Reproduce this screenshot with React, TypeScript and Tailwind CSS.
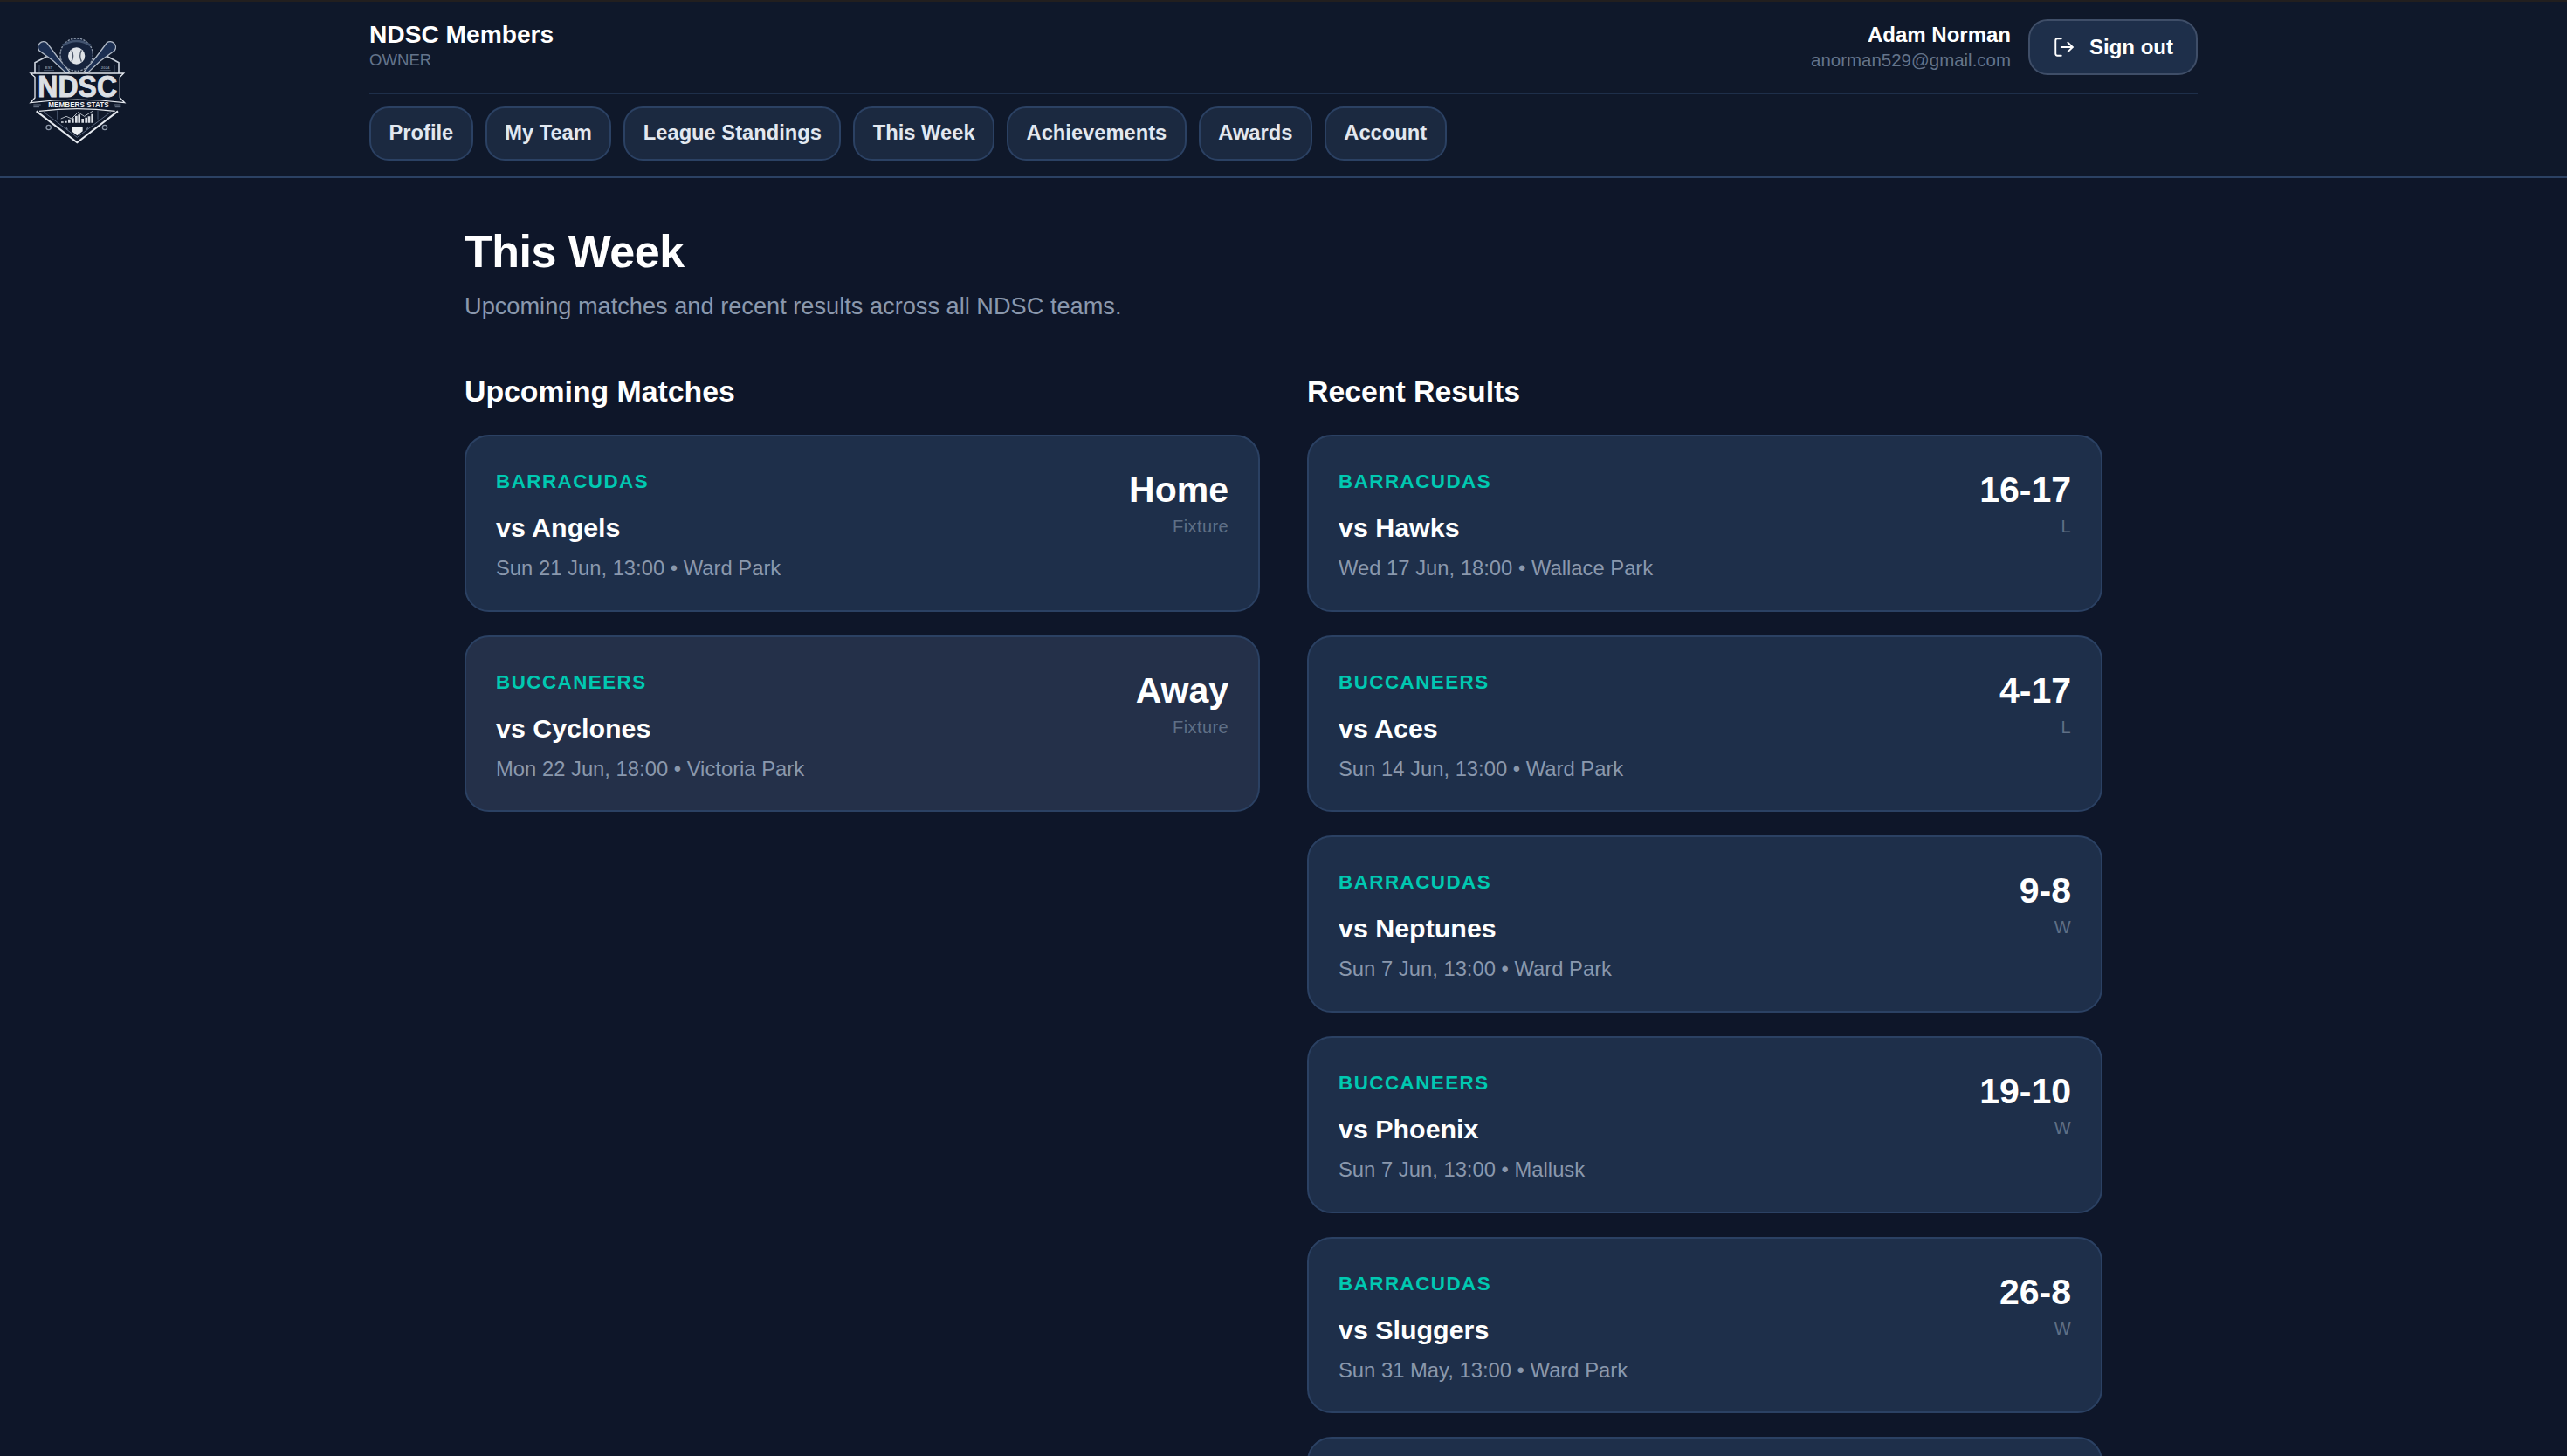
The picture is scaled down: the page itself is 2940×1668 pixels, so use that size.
import { LogOut } from "lucide-react";

const navItems = ["Profile", "My Team", "League Standings", "This Week", "Achievements", "Awards", "Account"];

const upcoming = [
  { team: "BARRACUDAS", opponent: "vs Angels", meta: "Sun 21 Jun, 13:00 • Ward Park", big: "Home", small: "Fixture", lighter: false },
  { team: "BUCCANEERS", opponent: "vs Cyclones", meta: "Mon 22 Jun, 18:00 • Victoria Park", big: "Away", small: "Fixture", lighter: true },
];

const results = [
  { team: "BARRACUDAS", opponent: "vs Hawks", meta: "Wed 17 Jun, 18:00 • Wallace Park", big: "16-17", small: "L", lighter: false },
  { team: "BUCCANEERS", opponent: "vs Aces", meta: "Sun 14 Jun, 13:00 • Ward Park", big: "4-17", small: "L", lighter: false },
  { team: "BARRACUDAS", opponent: "vs Neptunes", meta: "Sun 7 Jun, 13:00 • Ward Park", big: "9-8", small: "W", lighter: false },
  { team: "BUCCANEERS", opponent: "vs Phoenix", meta: "Sun 7 Jun, 13:00 • Mallusk", big: "19-10", small: "W", lighter: false },
  { team: "BARRACUDAS", opponent: "vs Sluggers", meta: "Sun 31 May, 13:00 • Ward Park", big: "26-8", small: "W", lighter: false },
];

const Logo = () => (
  <svg viewBox="0 0 540 480" className="w-[180px] h-[160px]" fill="none">
    {/* outer shield */}
    <path d="M165 132 L120 155 L120 192 M365 132 L408 155 L408 192" stroke="#c9d0da" strokeWidth="5" />
    <path d="M125 322 L265 430 L405 322" stroke="#e4e8ee" strokeWidth="6" />
    <path d="M150 325 L265 412 L380 325" stroke="#5a6880" strokeWidth="3" />
    <path d="M135 165 L135 190 M393 165 L393 190" stroke="#47556d" strokeWidth="3" />
    {/* bats */}
    <path d="M134 113 A19 19 0 0 1 161 87 L197 135 L239 186 L231 194 L183 149 Z" fill="#1c2f52" stroke="#aeb7c4" strokeWidth="4" />
    <path d="M394 113 A19 19 0 0 0 367 87 L331 135 L289 186 L297 194 L345 149 Z" fill="#1c2f52" stroke="#aeb7c4" strokeWidth="4" />
    {/* glove and ball */}
    <ellipse cx="263" cy="128" rx="56" ry="56" fill="#16233d" stroke="#8c97a8" strokeWidth="4" strokeDasharray="7 4" />
    <path d="M215 96 Q263 66 311 96" stroke="#42536f" strokeWidth="8" />
    <circle cx="263" cy="132" r="29" fill="#dfe3e8" />
    <path d="M246 112 Q256 132 246 152 M280 112 Q270 132 280 152" stroke="#4a5568" strokeWidth="4" />
    <text x="168" y="176" fill="#7f8a9b" fontSize="13" fontFamily="Liberation Sans" fontWeight="700" textAnchor="middle">EST</text>
    <text x="362" y="176" fill="#7f8a9b" fontSize="13" fontFamily="Liberation Sans" fontWeight="700" textAnchor="middle">2024</text>
    <path d="M150 182 H186 M344 182 H380" stroke="#46536a" strokeWidth="3" />
    {/* NDSC banner */}
    <path d="M105 192 H425 L412 205 V276 L428 293 Q265 272 105 293 L120 276 V205 Z" fill="#0e1729" stroke="#e4e8ee" strokeWidth="4" />
    <text x="266" y="274" fill="#dcdfe4" fontSize="104" fontFamily="Liberation Sans" fontWeight="700" textAnchor="middle" textLength="272" lengthAdjust="spacingAndGlyphs" stroke="#dcdfe4" strokeWidth="3">NDSC</text>
    {/* members stats ribbon */}
    <text x="270" y="309" fill="#f0f2f5" fontSize="26" fontFamily="Liberation Sans" fontWeight="700" textAnchor="middle" textLength="208" lengthAdjust="spacingAndGlyphs">MEMBERS STATS</text>
    <path d="M135 322 Q265 306 395 322" stroke="#dfe3e8" strokeWidth="4" />
    <path d="M115 300 H140 M115 308 H135 M390 300 H415 M395 308 H415" stroke="#6b778a" strokeWidth="3" />
    {/* chart */}
    <path d="M209 348 L228 340 L246 348 L268 326 L290 340 L318 322" stroke="#cfd5dd" strokeWidth="2.5" />
    <path d="M214 362 V358 M226 362 V356 M238 362 V350 M250 362 V346 M262 362 V338 M272 362 V334 M284 362 V348 M296 362 V344 M306 362 V340 M317 362 V332" stroke="#d8dce3" strokeWidth="8" />
    <path d="M197 320 V350 M336 320 V350" stroke="#47556d" strokeWidth="3" />
    {/* plate */}
    <path d="M246 377 H284 V391 L265 406 L246 391 Z" fill="#eceff2" />
    <path d="M228 378 L232 386 M302 378 L298 386" stroke="#6b778a" strokeWidth="4" />
    <circle cx="167" cy="378" r="8" stroke="#8c97a8" strokeWidth="4" />
    <circle cx="360" cy="378" r="8" stroke="#8c97a8" strokeWidth="4" />
  </svg>
);

type Match = (typeof upcoming)[number];

const MatchCard = ({ match }: { match: Match }) => (
  <div className={`flex justify-between rounded-[28px] border-2 border-[#2b4163] px-[34px] pt-[36px] pb-[29.7px] ${match.lighter ? "bg-[#243049]" : "bg-[#1e2f4a]"}`}>
    <div>
      <div className="text-[22.4px] leading-[32px] font-bold tracking-[0.065em] text-[#00c9b1]">{match.team}</div>
      <div className="mt-[14px] text-[30.4px] leading-[44px] font-bold text-white">{match.opponent}</div>
      <div className="mt-[7px] text-[23.8px] leading-[36px] text-[#8a98ad]">{match.meta}</div>
    </div>
    <div className="text-right">
      <div className="text-[41px] leading-[50px] font-bold text-white">{match.big}</div>
      <div className="mt-[2px] text-[20px] leading-[30px] tracking-[0.02em] text-[#5f6f86]">{match.small}</div>
    </div>
  </div>
);

export default function App() {
  return (
    <div className="relative h-[1668px] overflow-hidden bg-[#0e1629] [font-family:'Liberation_Sans',Arial,sans-serif] antialiased">
      <div className="h-[2px] bg-[#221f1f]" />

      {/* Header */}
      <header className="relative h-[202px] border-b-2 border-[#2b4163] bg-[#0f182a]">
        <div className="absolute left-0 top-[18px]">
          <Logo />
        </div>
        <div className="mx-auto w-[2094px]">
          <div className="flex h-[106px] items-start justify-between border-b-2 border-[#1e2f4a]">
            <div className="pt-[20px]">
              <div className="text-[28.16px] leading-[36px] font-bold text-white">NDSC Members</div>
              <div className="text-[18.6px] leading-[22px] text-[#64748b]">OWNER</div>
            </div>
            <div className="flex items-start gap-[20px] pt-[20px]">
              <div className="text-right">
                <div className="text-[24px] leading-[36px] font-bold text-white">Adam Norman</div>
                <div className="text-[20.48px] leading-[22px] text-[#64748b]">anorman529@gmail.com</div>
              </div>
              <button className="flex h-[64px] items-center gap-[16px] rounded-[22px] border-2 border-[#3f4e68] bg-[#1e2f4a] px-[26px] text-[24px] font-bold text-white">
                <LogOut className="h-[26px] w-[26px]" strokeWidth={1.75} />
                Sign out
              </button>
            </div>
          </div>
          <nav className="flex gap-[14px] pt-[14px]">
            {navItems.map((item) => (
              <a key={item} className="flex h-[62px] items-center rounded-[22px] border-2 border-[#2b4163] bg-[#1b2940] px-[20.5px] text-[23.7px] font-bold text-[#e2e8f0]">
                {item}
              </a>
            ))}
          </nav>
        </div>
      </header>

      {/* Page content */}
      <main className="mx-auto w-[1876px] pt-[50px]">
        <h1 className="text-[52px] leading-[68px] font-bold tracking-[-0.01em] text-white">This Week</h1>
        <p className="mt-[9px] text-[27.2px] leading-[40px] text-[#8a98ad]">Upcoming matches and recent results across all NDSC teams.</p>
        <div className="mt-[53px] grid grid-cols-2 gap-[54px]">
          <section>
            <h2 className="mb-[26px] text-[33.8px] leading-[48px] font-bold text-white">Upcoming Matches</h2>
            <div className="flex flex-col gap-[27px]">
              {upcoming.map((match) => (
                <MatchCard key={match.opponent} match={match} />
              ))}
            </div>
          </section>
          <section>
            <h2 className="mb-[26px] text-[33.8px] leading-[48px] font-bold text-white">Recent Results</h2>
            <div className="flex flex-col gap-[27px]">
              {results.map((match) => (
                <MatchCard key={match.opponent} match={match} />
              ))}
              <div className="h-[202px] rounded-[28px] border-2 border-[#2b4163] bg-[#1e2f4a]" />
            </div>
          </section>
        </div>
      </main>
    </div>
  );
}
